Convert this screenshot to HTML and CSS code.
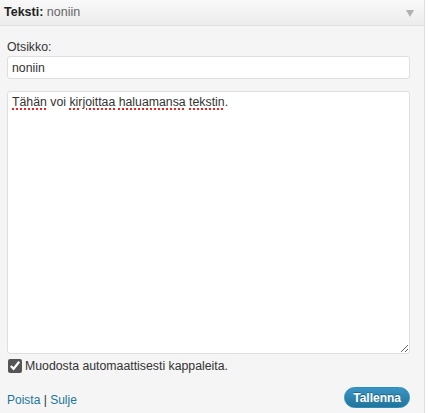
FILE: index.html
```html
<!DOCTYPE html>
<html>
<head>
<meta charset="utf-8">
<link rel="stylesheet" href="styles.css">
</head>
<body>
<div class="widget">
  <div class="widget-top">
    <h4 class="widget-title"><b>Teksti:</b> <span class="in-title">noniin</span></h4>
    <span class="toggle"></span>
  </div>
  <div class="widget-inside">
    <label class="field-label" for="title">Otsikko:</label>
    <input class="text-input" id="title" type="text" value="noniin">
    <div class="text-area"><span class="sp">Tähän</span> voi <span class="sp">kirjoittaa</span> <span class="sp">haluamansa</span> <span class="sp">tekstin</span>.</div>
    <label class="check-row"><input type="checkbox" class="check" checked> Muodosta automaattisesti kappaleita.</label>
    <div class="widget-control">
      <div class="links"><a href="#">Poista</a> | <a href="#">Sulje</a></div>
      <button class="save">Tallenna</button>
    </div>
  </div>
</div>
</body>
</html>
```
FILE: styles.css
```css
html, body {
  margin: 0;
  padding: 0;
  background: #fff;
}
body {
  font-family: "Liberation Sans", Arial, sans-serif;
  font-size: 12.3px;
  color: #333;
}
.widget {
  width: 424px;
  height: 413px;
  border-right: 1px solid #dfdfdf;
  background: #f5f5f5;
  box-sizing: content-box;
  display: flex;
  flex-direction: column;
}
.widget-top {
  height: 26px;
  box-sizing: border-box;
  background: linear-gradient(to bottom, #f9f9f9, #ececec);
  border-bottom: 1px solid #dfdfdf;
  display: flex;
  align-items: center;
  justify-content: space-between;
  padding: 0 10px 1px 4px;
}
.widget-title {
  margin: 0;
  font-size: 12.5px;
  font-weight: normal;
  color: #464646;
}
.widget-title b {
  color: #222;
  font-weight: bold;
}
.in-title {
  color: #666;
}
.toggle {
  width: 0;
  height: 0;
  border-left: 4px solid transparent;
  border-right: 4px solid transparent;
  border-top: 7px solid #b0b0b0;
  margin-top: 2px;
}
.widget-inside {
  flex: 1;
  display: flex;
  flex-direction: column;
  padding: 14px 14px 0 7px;
}
.field-label {
  font-size: 12.3px;
  color: #333;
  line-height: 15px;
}
.text-input {
  margin: 0;
  margin-top: 1px;
  height: 23px;
  box-sizing: border-box;
  border: 1px solid #dfdfdf;
  border-radius: 3px;
  background: #fff;
  font-family: "Liberation Sans", Arial, sans-serif;
  font-size: 12.3px;
  color: #333;
  padding: 0 4px;
  outline: none;
}
.text-area {
  margin-top: 12px;
  height: 263px;
  box-sizing: border-box;
  border: 1px solid #dfdfdf;
  border-radius: 3px;
  background: #fff;
  padding: 2px 4px;
  font-size: 12.3px;
  line-height: 17px;
  color: #333;
  resize: both;
  overflow: auto;
}
.sp {
  text-decoration: underline dotted #e22;
  text-decoration-thickness: 2px;
  text-underline-offset: 2px;
}
.check-row {
  display: flex;
  align-items: center;
  margin-top: 5px;
  color: #333;
  font-size: 12.3px;
}
.check {
  margin: 0 3px 0 1px;
  width: 14px;
  height: 14px;
  accent-color: #555;
}
.widget-control {
  display: flex;
  justify-content: space-between;
  align-items: center;
  margin-top: 14px;
}
.links {
  color: #333;
  font-size: 12px;
  padding-top: 4px;
}
.links a {
  color: #21759b;
  text-decoration: none;
}
.save {
  font-family: "Liberation Sans", Arial, sans-serif;
  font-size: 12px;
  font-weight: bold;
  color: #fff;
  border: 1px solid #298cba;
  border-radius: 11px;
  background: linear-gradient(to bottom, #3a94c4, #21759b);
  height: 21px;
  padding: 0 8px;
  margin-right: 0;
  text-shadow: 0 -1px 0 rgba(0,0,0,0.3);
}
```
